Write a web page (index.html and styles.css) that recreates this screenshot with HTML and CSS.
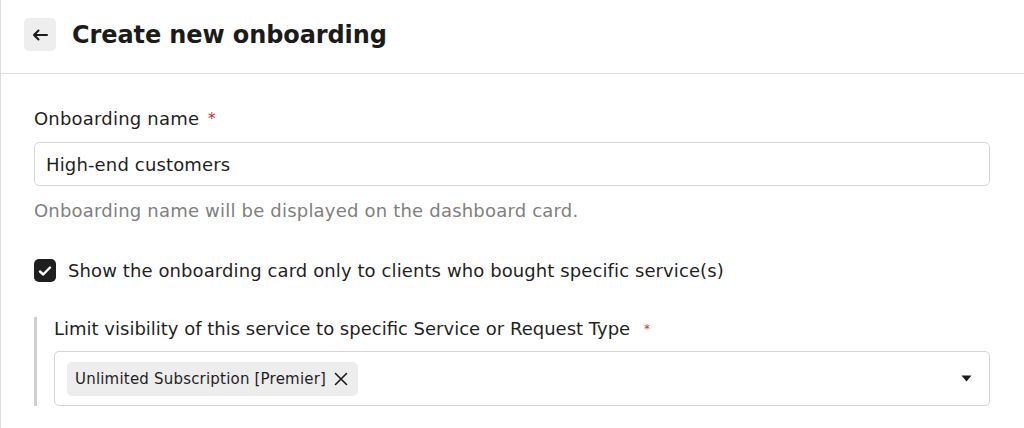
FILE: index.html
```html
<!DOCTYPE html>
<html lang="en">
<head>
<meta charset="utf-8">
<title>Create new onboarding</title>
<link rel="stylesheet" href="styles.css">
</head>
<body>
<div class="page">
  <header class="header">
    <button class="back" aria-label="Back">
      <svg width="16" height="12" viewBox="0 0 16 12"><path d="M15 6H2M6.5 1.5L2 6l4.5 4.5" fill="none" stroke="#1a1a1a" stroke-width="2" stroke-linecap="round" stroke-linejoin="round"/></svg>
    </button>
    <h1 class="title">Create new onboarding</h1>
  </header>
  <main class="content">
    <label class="label">Onboarding name <span class="req">*</span></label>
    <div class="input">High-end customers</div>
    <p class="help">Onboarding name will be displayed on the dashboard card.</p>
    <div class="check-row">
      <span class="checkbox">
        <svg width="14" height="12" viewBox="0 0 14 12"><path d="M2 6.5l3.2 3L12 2.5" fill="none" stroke="#fff" stroke-width="2.4" stroke-linecap="round" stroke-linejoin="round"/></svg>
      </span>
      <span class="check-label">Show the onboarding card only to clients who bought specific service(s)</span>
    </div>
    <section class="sub">
      <label class="label label-tight">Limit visibility of this service to specific Service or Request Type <span class="req req-gap">*</span></label>
      <div class="select">
        <span class="chip">Unlimited Subscription [Premier]
          <svg class="chip-x" width="14" height="14" viewBox="0 0 14 14"><path d="M1.5 1.5l11 11M12.5 1.5l-11 11" stroke="#1a1a1a" stroke-width="1.6" stroke-linecap="round"/></svg>
        </span>
        <svg class="caret" width="11" height="7" viewBox="0 0 11 7"><path d="M0.5 0.5h10L5.5 6.5z" fill="#1a1a1a"/></svg>
      </div>
    </section>
  </main>
</div>
</body>
</html>
```

FILE: styles.css
```css
* { box-sizing: border-box; }
html, body { margin: 0; padding: 0; background: #fff; }
body {
  font-family: "DejaVu Sans", "Noto Sans", sans-serif;
  color: #1f1f1f;
}
.page {
  border-left: 1px solid #dcdcdc;
  min-height: 428px;
}
.header {
  height: 74px;
  border-bottom: 1px solid #dedede;
  display: flex;
  align-items: center;
  padding-left: 23px;
  gap: 16px;
  padding-bottom: 4px;
}
.back {
  width: 32px;
  height: 33px;
  border: none;
  border-radius: 5px;
  background: #eeeeee;
  display: flex;
  align-items: center;
  justify-content: center;
  padding: 0;
}
.title {
  margin: 0;
  font-size: 24px;
  font-weight: 700;
  color: #1b1b1b;
  letter-spacing: -0.1px;
}
.content {
  padding: 33px 34px 0 33px;
}
.label {
  display: block;
  font-size: 18px;
  line-height: 24px;
  color: #1f1f1f;
  letter-spacing: 0.2px;
}
.label-tight { letter-spacing: 0; }
.req {
  color: #d0312d;
  font-size: 15px;
  vertical-align: top;
  margin-left: 3px;
}
.req-gap { margin-left: 8px; font-size: 12px; }
.input {
  margin-top: 11px;
  height: 44px;
  border: 1px solid #d6d6d6;
  border-radius: 5px;
  display: flex;
  align-items: center;
  padding-left: 11px;
  font-size: 18px;
  letter-spacing: 0.15px;
  color: #1f1f1f;
}
.help {
  margin: 13px 0 0 0;
  font-size: 18px;
  line-height: 24px;
  letter-spacing: 0.2px;
  color: #808080;
}
.check-row {
  margin-top: 36px;
  display: flex;
  align-items: center;
  gap: 12px;
}
.checkbox {
  width: 22px;
  height: 23px;
  border-radius: 5px;
  background: #1f1f1f;
  display: flex;
  align-items: center;
  justify-content: center;
}
.check-label {
  font-size: 18px;
  letter-spacing: 0.1px;
  color: #1f1f1f;
}
.sub {
  margin-top: 35px;
  border-left: 3px solid #cfcfcf;
  padding-left: 17px;
}
.select {
  margin-top: 10px;
  height: 55px;
  border: 1px solid #d6d6d6;
  border-radius: 5px;
  display: flex;
  align-items: center;
  justify-content: space-between;
  padding: 0 17px 0 12px;
}
.chip {
  height: 34px;
  border-radius: 5px;
  background: #ededed;
  display: flex;
  align-items: center;
  gap: 8px;
  padding: 0 10px 0 8px;
  font-size: 15px;
  letter-spacing: 0.2px;
  color: #1f1f1f;
}
.chip-x { flex: none; }
.caret { flex: none; }
```
